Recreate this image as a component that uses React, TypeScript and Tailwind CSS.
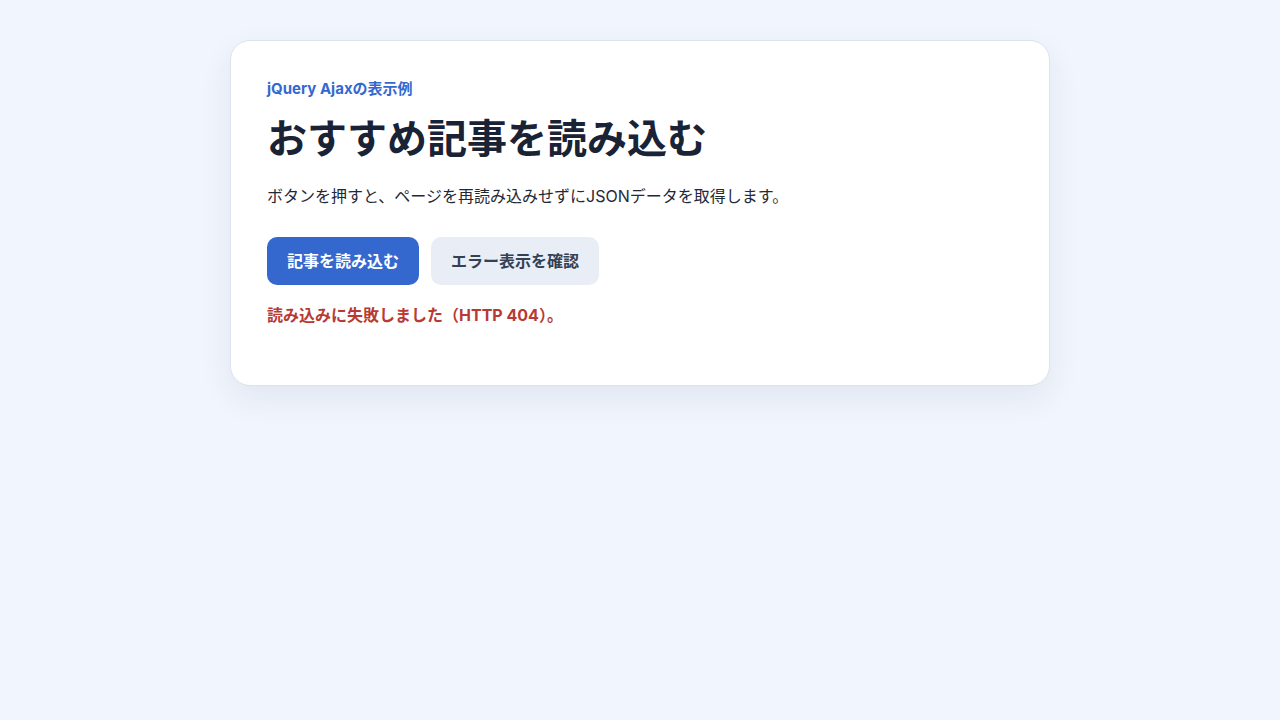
import React from "react";

export default function App() {
  return (
    <div
      className="min-h-[720px] w-full bg-[#f1f5fd] pt-10"
      style={{ fontFamily: 'Inter, "Noto Sans CJK JP", sans-serif' }}
    >
      <div className="mx-auto w-[820px] rounded-[20px] border border-[#dde3ec] bg-white px-9 pt-[38px] pb-[58px] shadow-[0_12px_32px_rgba(30,50,90,0.08)]">
        <div className="text-[15px] font-bold leading-5 text-[#3468cf]">jQuery Ajaxの表示例</div>
        <h1 className="mt-[14px] text-[40px] font-bold leading-[52px] text-[#1a2235]">おすすめ記事を読み込む</h1>
        <p className="mt-[19px] text-[16px] leading-6 text-[#1f2937]">
          ボタンを押すと、ページを再読み込みせずにJSONデータを取得します。
        </p>
        <div className="mt-[29px] flex gap-3">
          <button className="h-12 rounded-[10px] bg-[#3468cf] px-5 text-[16px] font-bold text-white">記事を読み込む</button>
          <button className="h-12 rounded-[10px] bg-[#e8edf6] px-5 text-[16px] font-bold text-[#334155]">エラー表示を確認</button>
        </div>
        <p className="mt-[18px] text-[16px] font-bold leading-6 text-[#b83a35]">読み込みに失敗しました（HTTP 404）。</p>
      </div>
    </div>
  );
}
